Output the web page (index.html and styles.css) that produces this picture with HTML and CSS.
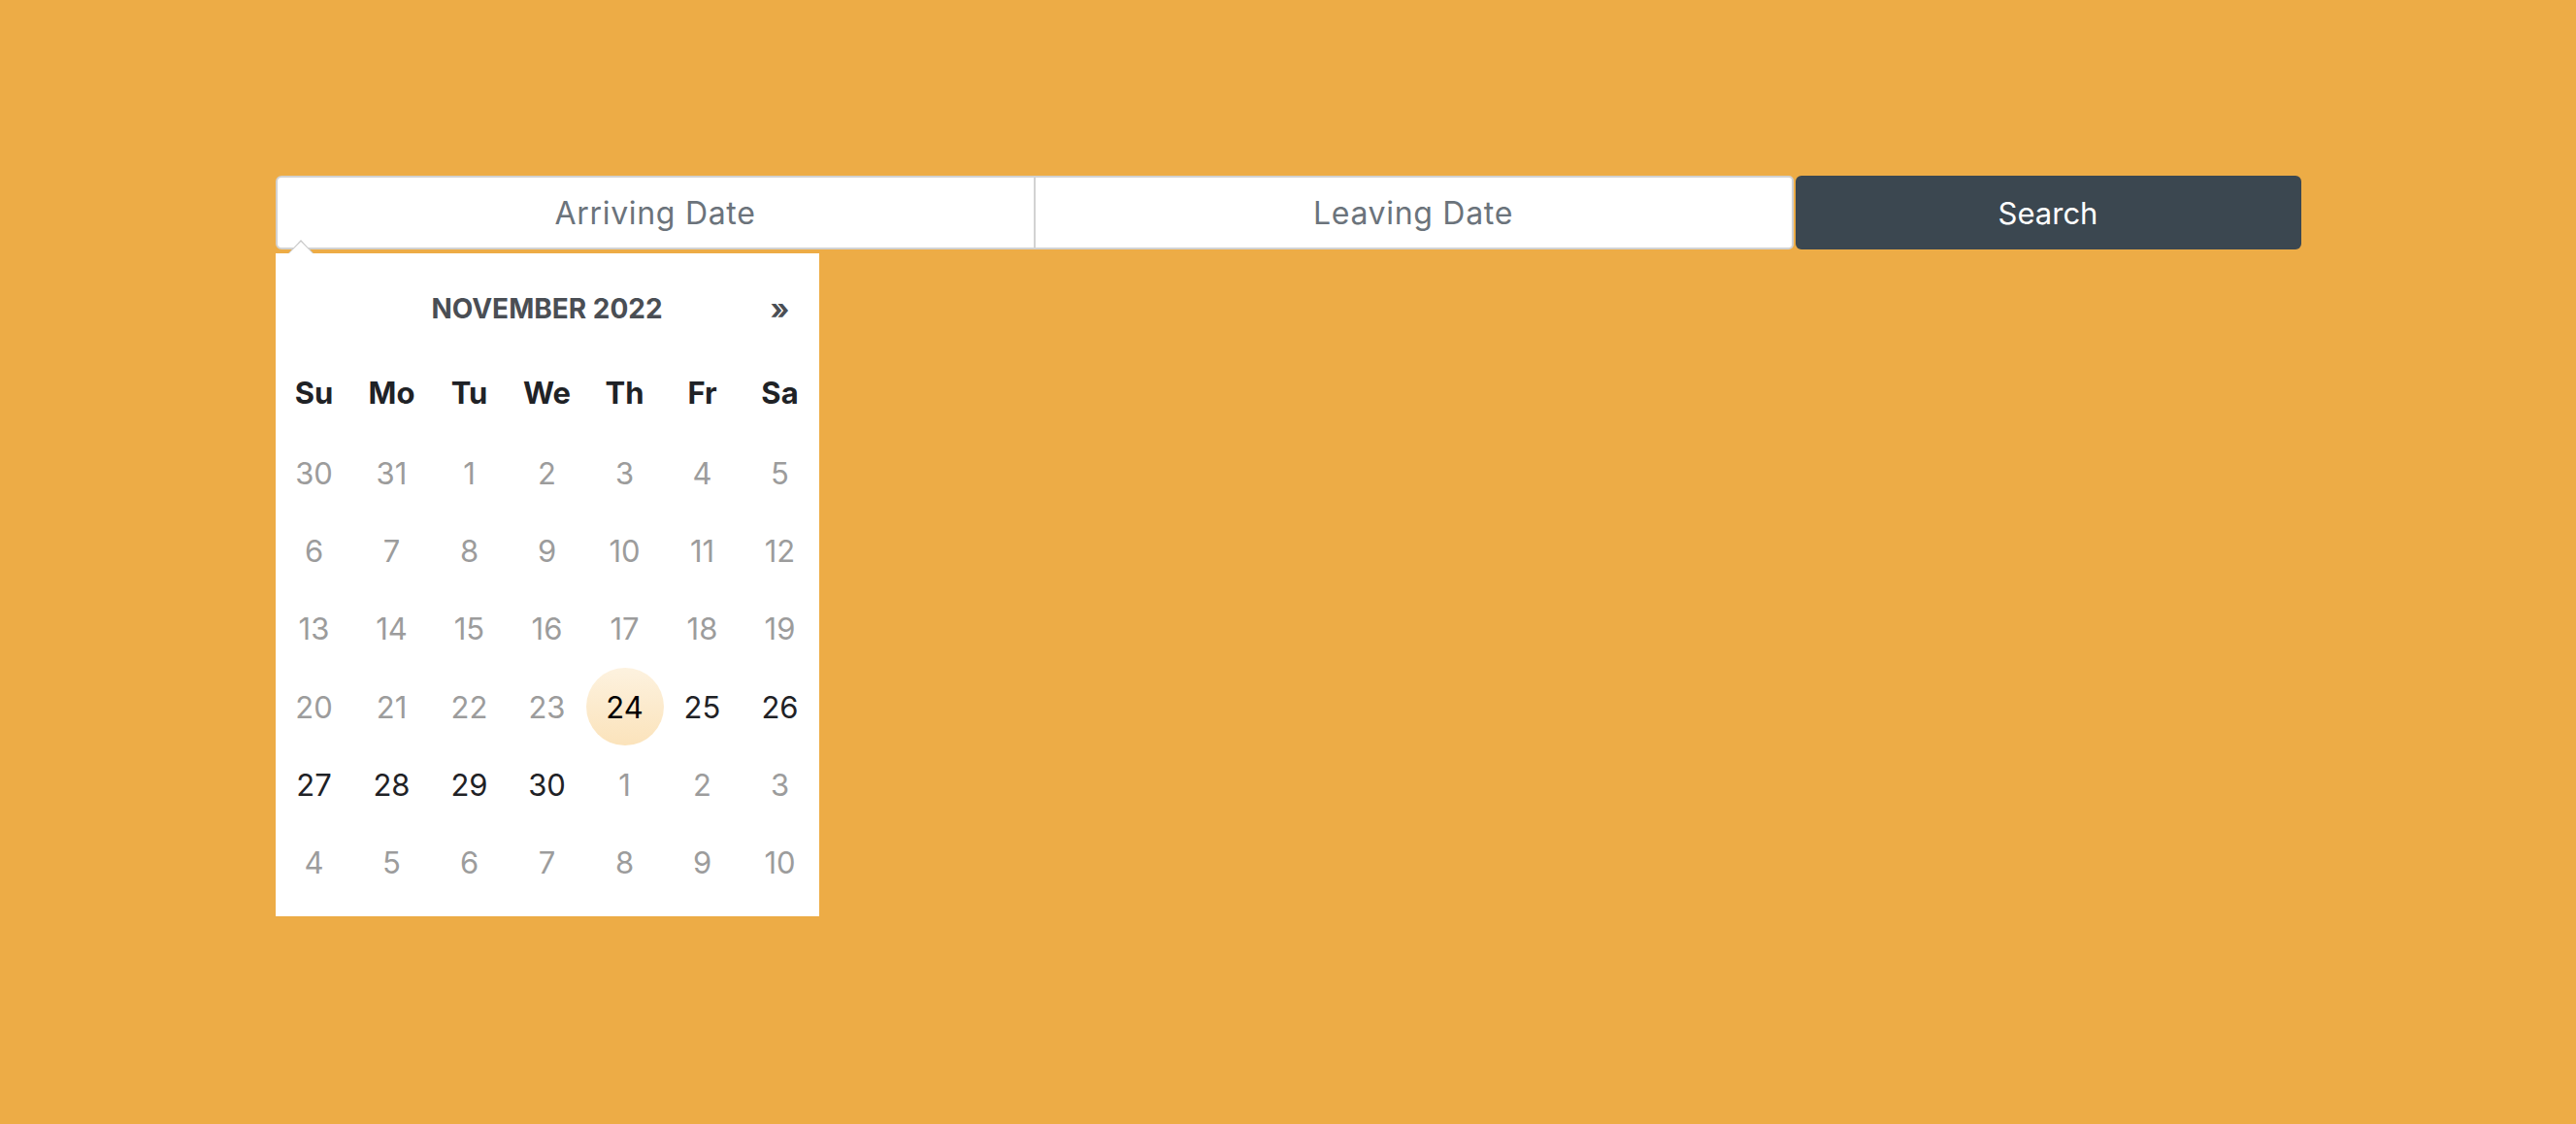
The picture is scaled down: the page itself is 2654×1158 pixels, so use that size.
FILE: index.html
```html
<!DOCTYPE html>
<html lang="en">
<head>
    <meta charset="UTF-8">
    <meta name="viewport" content="width=device-width, initial-scale=1.0">
    <title>Booking - Date Picker</title>
    <link rel="stylesheet" href="styles.css">
</head>
<body>
    <div class="page">
        <div class="booking">
            <div class="date-input first">Arriving Date</div>
            <div class="date-input last">Leaving Date</div>
            <div class="search-btn">Search</div>
        </div>

        <div class="cal-pop">
            <div class="cal-head">
                <span class="cal-prev"></span>
                <span class="cal-title">NOVEMBER 2022</span>
                <span class="cal-next">&raquo;</span>
            </div>
            <div class="cal-grid">
                <span class="dow">Su</span>
                <span class="dow">Mo</span>
                <span class="dow">Tu</span>
                <span class="dow">We</span>
                <span class="dow">Th</span>
                <span class="dow">Fr</span>
                <span class="dow">Sa</span>

                <span class="day off">30</span>
                <span class="day off">31</span>
                <span class="day off">1</span>
                <span class="day off">2</span>
                <span class="day off">3</span>
                <span class="day off">4</span>
                <span class="day off">5</span>

                <span class="day off">6</span>
                <span class="day off">7</span>
                <span class="day off">8</span>
                <span class="day off">9</span>
                <span class="day off">10</span>
                <span class="day off">11</span>
                <span class="day off">12</span>

                <span class="day off">13</span>
                <span class="day off">14</span>
                <span class="day off">15</span>
                <span class="day off">16</span>
                <span class="day off">17</span>
                <span class="day off">18</span>
                <span class="day off">19</span>

                <span class="day off">20</span>
                <span class="day off">21</span>
                <span class="day off">22</span>
                <span class="day off">23</span>
                <span class="day today">24</span>
                <span class="day">25</span>
                <span class="day">26</span>

                <span class="day">27</span>
                <span class="day">28</span>
                <span class="day">29</span>
                <span class="day">30</span>
                <span class="day off">1</span>
                <span class="day off">2</span>
                <span class="day off">3</span>

                <span class="day off">4</span>
                <span class="day off">5</span>
                <span class="day off">6</span>
                <span class="day off">7</span>
                <span class="day off">8</span>
                <span class="day off">9</span>
                <span class="day off">10</span>
            </div>
        </div>
    </div>
</body>
</html>
```

FILE: styles.css
```css
body {
    margin: 0;
    background-color: #edac46;
    font-family: Inter, "Noto Sans", sans-serif;
}

.page {
    display: flex;
    flex-direction: column;
    align-items: flex-start;
    width: 2087px;
    margin: 0 auto;
    padding-top: 181px;
}

.booking {
    display: flex;
    width: 100%;
}

.date-input {
    box-sizing: border-box;
    display: flex;
    align-items: center;
    justify-content: center;
    width: 782px;
    height: 76px;
    border: 2px solid #d2d2d2;
    background-color: #fff;
    font-size: 32px;
    letter-spacing: 0.7px;
    color: #6b737b;
}

.date-input.first {
    border-right: 1px solid #d2d2d2;
    border-radius: 6px 0 0 6px;
}

.date-input.last {
    border-left: 1px solid #d2d2d2;
    border-radius: 0 5px 5px 0;
}

.search-btn {
    display: flex;
    align-items: center;
    justify-content: center;
    width: 521px;
    height: 76px;
    margin-left: 2px;
    border-radius: 6px;
    background-color: #3b4750;
    color: #fff;
    font-size: 31px;
}

/* calendar dropdown */
.cal-pop {
    position: relative;
    width: 560px;
    margin-top: 4px;
    padding: 14px 0 15px;
    background-color: #fff;
}

.cal-pop::before,
.cal-pop::after {
    content: "";
    position: absolute;
    left: 13px;
    border-left: 13px solid transparent;
    border-right: 13px solid transparent;
}

.cal-pop::before {
    top: -14px;
    border-bottom: 14px solid #c9c9c9;
}

.cal-pop::after {
    top: -12px;
    left: 14px;
    border-left-width: 12px;
    border-right-width: 12px;
    border-bottom: 12px solid #fff;
}

.cal-head {
    display: grid;
    grid-template-columns: 80px 1fr 80px;
    align-items: center;
    height: 86px;
    text-align: center;
}

.cal-title {
    font-size: 28px;
    font-weight: 700;
    color: #4a4e54;
}

.cal-next {
    font-size: 30px;
    font-weight: 700;
    color: #4a4e54;
}

.cal-grid {
    display: grid;
    grid-template-columns: repeat(7, 80px);
    grid-template-rows: 86px;
    grid-auto-rows: 80.3px;
}

.dow,
.day {
    display: flex;
    align-items: center;
    justify-content: center;
}

.dow {
    font-size: 31px;
    font-weight: 700;
    color: #1f2226;
}

.day {
    font-size: 31px;
    color: #1f2226;
}

.day.off {
    color: #9c9c9c;
}

.day.today {
    border-radius: 50%;
    background: linear-gradient(to bottom, #fdf2df, #fbe3bb);
    color: #000;
}
```
